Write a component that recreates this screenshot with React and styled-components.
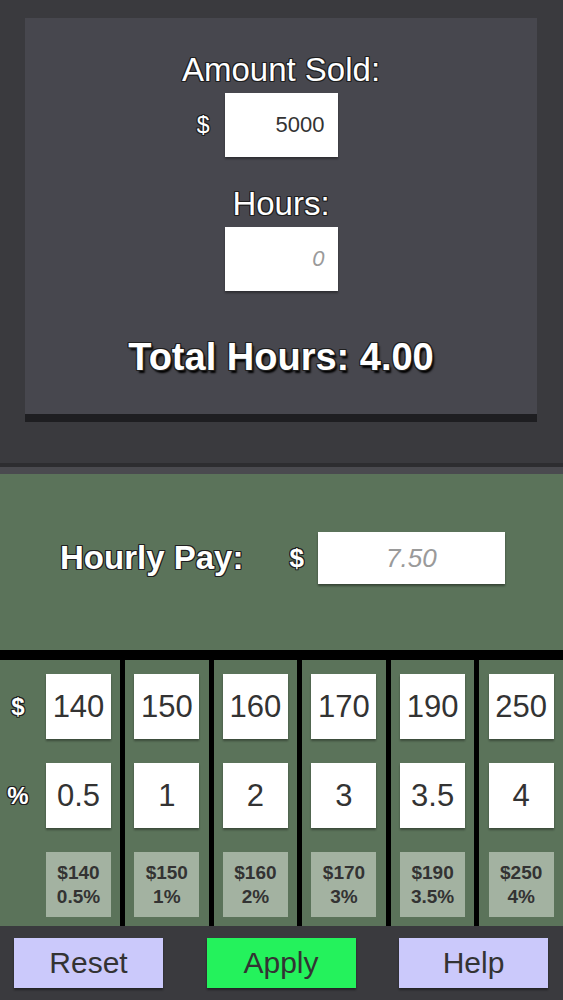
import styled, { createGlobalStyle } from "styled-components";

const GlobalStyle = createGlobalStyle`
  html, body {
    margin: 0;
    padding: 0;
    background: #3a3a3e;
    font-family: "Liberation Sans", Arial, sans-serif;
  }
`;

const outline = `
  -1px -1px 0 #1f1f1f, 1px -1px 0 #1f1f1f, -1px 1px 0 #1f1f1f, 1px 1px 0 #1f1f1f,
  0 1px 0 #1f1f1f, 0 -1px 0 #1f1f1f, 1px 0 0 #1f1f1f, -1px 0 0 #1f1f1f
`;

const columns = [
  { amount: 140, pct: "0.5" },
  { amount: 150, pct: "1" },
  { amount: 160, pct: "2" },
  { amount: 170, pct: "3" },
  { amount: 190, pct: "3.5" },
  { amount: 250, pct: "4" },
];

export default function App() {
  return (
    <Page>
      <GlobalStyle />
      <TopArea>
        <Panel>
          <Label>Amount Sold:</Label>
          <InputRow>
            <Currency>$</Currency>
            <Field $value>5000</Field>
          </InputRow>
          <Label $space>Hours:</Label>
          <InputRow>
            <span />
            <Field>0</Field>
          </InputRow>
          <Total>Total Hours: 4.00</Total>
        </Panel>
      </TopArea>

      <Separator />

      <PaySection>
        <PayLabel>Hourly Pay:</PayLabel>
        <PayCurrency>$</PayCurrency>
        <PayField>7.50</PayField>
      </PaySection>

      <Grid>
        {columns.map((c, i) => (
          <Column key={c.amount} $labelled={i === 0}>
            {i === 0 && <RowLabel>$</RowLabel>}
            <Box>{c.amount}</Box>
            {i === 0 && <RowLabel>%</RowLabel>}
            <Box>{c.pct}</Box>
            {i === 0 && <span />}
            <Summary>
              <span>{`$${c.amount}`}</span>
              <span>{`${c.pct}%`}</span>
            </Summary>
          </Column>
        ))}
      </Grid>

      <Footer>
        <Button $color="#cbc9fb">Reset</Button>
        <Button $color="#24f25c">Apply</Button>
        <Button $color="#cbc9fb">Help</Button>
      </Footer>
    </Page>
  );
}

const Page = styled.div`
  width: 563px;
  height: 1000px;
  display: flex;
  flex-direction: column;
  overflow: hidden;
`;

const TopArea = styled.div`
  height: 463px;
  box-sizing: border-box;
  padding: 18px 26px 0 25px;
`;

const Panel = styled.div`
  height: 396px;
  box-sizing: border-box;
  padding-top: 36px;
  background: #47474e;
  box-shadow: 0 8px 0 #1e1e21;
  display: flex;
  flex-direction: column;
  align-items: center;
`;

const Label = styled.div`
  font-size: 33px;
  line-height: 32px;
  color: #fff;
  text-shadow: ${outline};
  margin-top: ${(p) => (p.$space ? "31px" : "0")};
  margin-bottom: 7px;
`;

const InputRow = styled.div`
  display: grid;
  grid-template-columns: 1fr 113px 1fr;
  align-items: center;
  width: 100%;
`;

const Currency = styled.span`
  justify-self: end;
  margin-right: 15px;
  font-size: 23px;
  color: #fff;
  text-shadow: ${outline};
`;

const Field = styled.div`
  grid-column: 2;
  height: 64px;
  box-sizing: border-box;
  padding-right: 13px;
  background: #fff;
  box-shadow: 0 2px 2px rgba(0, 0, 0, 0.35);
  display: flex;
  align-items: center;
  justify-content: flex-end;
  font-size: 22px;
  color: ${(p) => (p.$value ? "#333" : "#9a9a9a")};
  font-style: ${(p) => (p.$value ? "normal" : "italic")};
`;

const Total = styled.div`
  margin-top: 46px;
  font-size: 38px;
  line-height: 40px;
  font-weight: bold;
  color: #fff;
  text-shadow: ${outline}, 2px 3px 2px #000;
`;

const Separator = styled.div`
  height: 7px;
  background: #4a4a4f;
  border-top: 4px solid #2d2d30;
`;

const PaySection = styled.div`
  height: 176px;
  box-sizing: border-box;
  padding: 0 0 8px 60px;
  background: #5b735a;
  display: flex;
  align-items: center;
`;

const PayLabel = styled.div`
  font-size: 33px;
  font-weight: bold;
  color: #fff;
  text-shadow: ${outline};
`;

const PayCurrency = styled.div`
  margin-left: 46px;
  font-size: 26px;
  font-weight: bold;
  color: #fff;
  text-shadow: ${outline};
`;

const PayField = styled.div`
  margin-left: 14px;
  width: 187px;
  height: 52px;
  background: #fff;
  box-shadow: 0 2px 2px rgba(0, 0, 0, 0.4);
  display: flex;
  align-items: center;
  justify-content: center;
  font-size: 26px;
  font-style: italic;
  color: #9a9a9a;
`;

const Grid = styled.div`
  display: grid;
  grid-template-columns: 120px repeat(5, 1fr);
  column-gap: 5px;
  height: 276px;
  box-sizing: border-box;
  border-top: 10px solid #000;
  background: #000;
`;

const Column = styled.div`
  background: #5b735a;
  display: grid;
  grid-template-columns: ${(p) => (p.$labelled ? "46px 65px" : "65px")};
  grid-template-rows: repeat(3, 65px);
  row-gap: 24px;
  justify-content: ${(p) => (p.$labelled ? "start" : "center")};
  align-content: start;
  padding-top: 14px;
`;

const RowLabel = styled.div`
  display: flex;
  align-items: center;
  justify-content: center;
  padding-right: 10px;
  font-size: 24px;
  font-weight: bold;
  color: #fff;
  text-shadow: ${outline};
`;

const Box = styled.div`
  background: #fff;
  box-shadow: 0 2px 2px rgba(0, 0, 0, 0.35);
  display: flex;
  align-items: center;
  justify-content: center;
  font-size: 31px;
  color: #333;
`;

const Summary = styled.div`
  background: #a3b2a1;
  display: flex;
  flex-direction: column;
  align-items: center;
  justify-content: center;
  text-align: center;
  font-size: 19px;
  line-height: 24px;
  font-weight: bold;
  color: #333;
`;

const Footer = styled.div`
  flex: 1;
  display: flex;
  justify-content: space-between;
  align-items: flex-start;
  padding: 12px 15px 0 14px;
  background: #3a3a3e;
`;

const Button = styled.button`
  width: 149px;
  height: 50px;
  border: none;
  background: ${(p) => p.$color};
  box-shadow: 0 2px 2px rgba(0, 0, 0, 0.4);
  font-family: inherit;
  font-size: 30px;
  color: #333;
  padding: 0;
`;
